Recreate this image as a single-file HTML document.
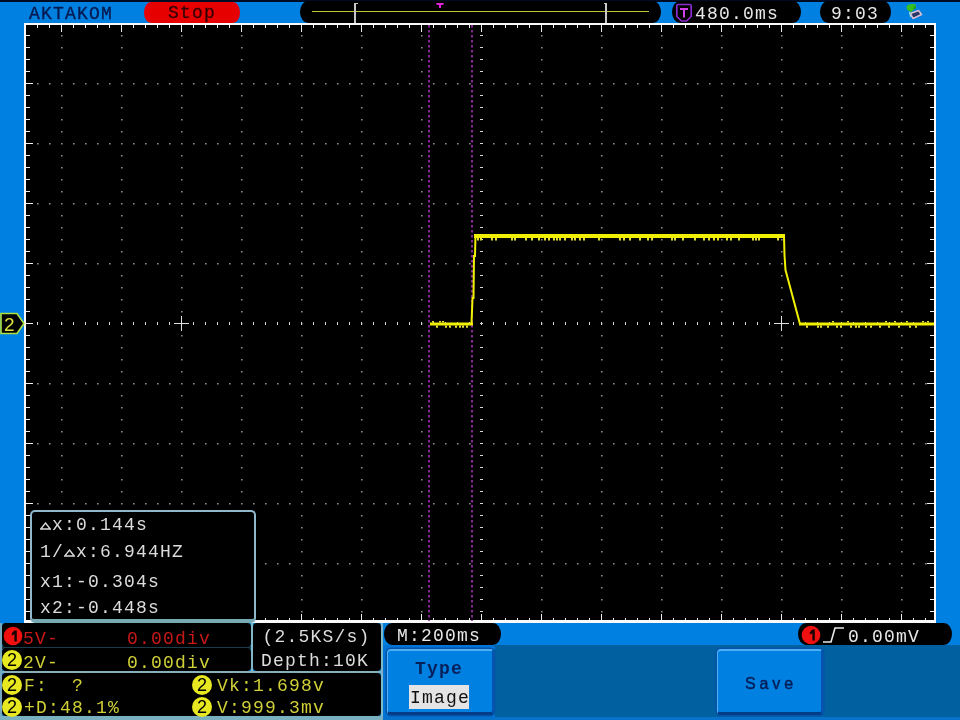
<!DOCTYPE html>
<html><head><meta charset="utf-8"><style>
html,body{margin:0;padding:0;width:960px;height:720px;overflow:hidden;background:#0080e0;}
*{box-sizing:border-box}
.a{position:absolute}
.m{font-family:"Liberation Mono",monospace;font-size:18px;letter-spacing:1.2px;line-height:18px;white-space:pre}
.s{font-family:"Liberation Sans",sans-serif}
.pill{position:absolute;background:#000;border-radius:8px / 11px}
.panel{position:absolute;background:#000;border-radius:5px}
.btn{position:absolute;background:#0080e0;border-radius:4px;border-top:2px solid #50acf4;border-left:1.5px solid #58b0f4;border-right:2px solid #0654b0;border-bottom:3px solid #043c88;box-shadow:0 0 0 1.5px #0454a8}
.circ{position:absolute;width:20px;height:20px;border-radius:50%;font-family:"Liberation Sans",sans-serif;font-size:18px;line-height:21px;text-align:center;color:#000}
#wrap{position:absolute;left:0;top:0;width:960px;height:720px;overflow:hidden;filter:blur(0.4px)}
</style></head><body><div id="wrap">
<svg width="960" height="720" style="position:absolute;left:0;top:0"><rect x="24" y="23" width="912" height="600" fill="#000"/><path d="M37 83h1.6v1.6h-1.6zM49 83h1.6v1.6h-1.6zM73 83h1.6v1.6h-1.6zM85 83h1.6v1.6h-1.6zM97 83h1.6v1.6h-1.6zM109 83h1.6v1.6h-1.6zM133 83h1.6v1.6h-1.6zM145 83h1.6v1.6h-1.6zM157 83h1.6v1.6h-1.6zM169 83h1.6v1.6h-1.6zM193 83h1.6v1.6h-1.6zM205 83h1.6v1.6h-1.6zM217 83h1.6v1.6h-1.6zM229 83h1.6v1.6h-1.6zM253 83h1.6v1.6h-1.6zM265 83h1.6v1.6h-1.6zM277 83h1.6v1.6h-1.6zM289 83h1.6v1.6h-1.6zM313 83h1.6v1.6h-1.6zM325 83h1.6v1.6h-1.6zM337 83h1.6v1.6h-1.6zM349 83h1.6v1.6h-1.6zM373 83h1.6v1.6h-1.6zM385 83h1.6v1.6h-1.6zM397 83h1.6v1.6h-1.6zM409 83h1.6v1.6h-1.6zM433 83h1.6v1.6h-1.6zM445 83h1.6v1.6h-1.6zM457 83h1.6v1.6h-1.6zM469 83h1.6v1.6h-1.6zM493 83h1.6v1.6h-1.6zM505 83h1.6v1.6h-1.6zM517 83h1.6v1.6h-1.6zM529 83h1.6v1.6h-1.6zM553 83h1.6v1.6h-1.6zM565 83h1.6v1.6h-1.6zM577 83h1.6v1.6h-1.6zM589 83h1.6v1.6h-1.6zM613 83h1.6v1.6h-1.6zM625 83h1.6v1.6h-1.6zM637 83h1.6v1.6h-1.6zM649 83h1.6v1.6h-1.6zM673 83h1.6v1.6h-1.6zM685 83h1.6v1.6h-1.6zM697 83h1.6v1.6h-1.6zM709 83h1.6v1.6h-1.6zM733 83h1.6v1.6h-1.6zM745 83h1.6v1.6h-1.6zM757 83h1.6v1.6h-1.6zM769 83h1.6v1.6h-1.6zM793 83h1.6v1.6h-1.6zM805 83h1.6v1.6h-1.6zM817 83h1.6v1.6h-1.6zM829 83h1.6v1.6h-1.6zM853 83h1.6v1.6h-1.6zM865 83h1.6v1.6h-1.6zM877 83h1.6v1.6h-1.6zM889 83h1.6v1.6h-1.6zM913 83h1.6v1.6h-1.6zM925 83h1.6v1.6h-1.6zM37 143h1.6v1.6h-1.6zM49 143h1.6v1.6h-1.6zM73 143h1.6v1.6h-1.6zM85 143h1.6v1.6h-1.6zM97 143h1.6v1.6h-1.6zM109 143h1.6v1.6h-1.6zM133 143h1.6v1.6h-1.6zM145 143h1.6v1.6h-1.6zM157 143h1.6v1.6h-1.6zM169 143h1.6v1.6h-1.6zM193 143h1.6v1.6h-1.6zM205 143h1.6v1.6h-1.6zM217 143h1.6v1.6h-1.6zM229 143h1.6v1.6h-1.6zM253 143h1.6v1.6h-1.6zM265 143h1.6v1.6h-1.6zM277 143h1.6v1.6h-1.6zM289 143h1.6v1.6h-1.6zM313 143h1.6v1.6h-1.6zM325 143h1.6v1.6h-1.6zM337 143h1.6v1.6h-1.6zM349 143h1.6v1.6h-1.6zM373 143h1.6v1.6h-1.6zM385 143h1.6v1.6h-1.6zM397 143h1.6v1.6h-1.6zM409 143h1.6v1.6h-1.6zM433 143h1.6v1.6h-1.6zM445 143h1.6v1.6h-1.6zM457 143h1.6v1.6h-1.6zM469 143h1.6v1.6h-1.6zM493 143h1.6v1.6h-1.6zM505 143h1.6v1.6h-1.6zM517 143h1.6v1.6h-1.6zM529 143h1.6v1.6h-1.6zM553 143h1.6v1.6h-1.6zM565 143h1.6v1.6h-1.6zM577 143h1.6v1.6h-1.6zM589 143h1.6v1.6h-1.6zM613 143h1.6v1.6h-1.6zM625 143h1.6v1.6h-1.6zM637 143h1.6v1.6h-1.6zM649 143h1.6v1.6h-1.6zM673 143h1.6v1.6h-1.6zM685 143h1.6v1.6h-1.6zM697 143h1.6v1.6h-1.6zM709 143h1.6v1.6h-1.6zM733 143h1.6v1.6h-1.6zM745 143h1.6v1.6h-1.6zM757 143h1.6v1.6h-1.6zM769 143h1.6v1.6h-1.6zM793 143h1.6v1.6h-1.6zM805 143h1.6v1.6h-1.6zM817 143h1.6v1.6h-1.6zM829 143h1.6v1.6h-1.6zM853 143h1.6v1.6h-1.6zM865 143h1.6v1.6h-1.6zM877 143h1.6v1.6h-1.6zM889 143h1.6v1.6h-1.6zM913 143h1.6v1.6h-1.6zM925 143h1.6v1.6h-1.6zM37 203h1.6v1.6h-1.6zM49 203h1.6v1.6h-1.6zM73 203h1.6v1.6h-1.6zM85 203h1.6v1.6h-1.6zM97 203h1.6v1.6h-1.6zM109 203h1.6v1.6h-1.6zM133 203h1.6v1.6h-1.6zM145 203h1.6v1.6h-1.6zM157 203h1.6v1.6h-1.6zM169 203h1.6v1.6h-1.6zM193 203h1.6v1.6h-1.6zM205 203h1.6v1.6h-1.6zM217 203h1.6v1.6h-1.6zM229 203h1.6v1.6h-1.6zM253 203h1.6v1.6h-1.6zM265 203h1.6v1.6h-1.6zM277 203h1.6v1.6h-1.6zM289 203h1.6v1.6h-1.6zM313 203h1.6v1.6h-1.6zM325 203h1.6v1.6h-1.6zM337 203h1.6v1.6h-1.6zM349 203h1.6v1.6h-1.6zM373 203h1.6v1.6h-1.6zM385 203h1.6v1.6h-1.6zM397 203h1.6v1.6h-1.6zM409 203h1.6v1.6h-1.6zM433 203h1.6v1.6h-1.6zM445 203h1.6v1.6h-1.6zM457 203h1.6v1.6h-1.6zM469 203h1.6v1.6h-1.6zM493 203h1.6v1.6h-1.6zM505 203h1.6v1.6h-1.6zM517 203h1.6v1.6h-1.6zM529 203h1.6v1.6h-1.6zM553 203h1.6v1.6h-1.6zM565 203h1.6v1.6h-1.6zM577 203h1.6v1.6h-1.6zM589 203h1.6v1.6h-1.6zM613 203h1.6v1.6h-1.6zM625 203h1.6v1.6h-1.6zM637 203h1.6v1.6h-1.6zM649 203h1.6v1.6h-1.6zM673 203h1.6v1.6h-1.6zM685 203h1.6v1.6h-1.6zM697 203h1.6v1.6h-1.6zM709 203h1.6v1.6h-1.6zM733 203h1.6v1.6h-1.6zM745 203h1.6v1.6h-1.6zM757 203h1.6v1.6h-1.6zM769 203h1.6v1.6h-1.6zM793 203h1.6v1.6h-1.6zM805 203h1.6v1.6h-1.6zM817 203h1.6v1.6h-1.6zM829 203h1.6v1.6h-1.6zM853 203h1.6v1.6h-1.6zM865 203h1.6v1.6h-1.6zM877 203h1.6v1.6h-1.6zM889 203h1.6v1.6h-1.6zM913 203h1.6v1.6h-1.6zM925 203h1.6v1.6h-1.6zM37 263h1.6v1.6h-1.6zM49 263h1.6v1.6h-1.6zM73 263h1.6v1.6h-1.6zM85 263h1.6v1.6h-1.6zM97 263h1.6v1.6h-1.6zM109 263h1.6v1.6h-1.6zM133 263h1.6v1.6h-1.6zM145 263h1.6v1.6h-1.6zM157 263h1.6v1.6h-1.6zM169 263h1.6v1.6h-1.6zM193 263h1.6v1.6h-1.6zM205 263h1.6v1.6h-1.6zM217 263h1.6v1.6h-1.6zM229 263h1.6v1.6h-1.6zM253 263h1.6v1.6h-1.6zM265 263h1.6v1.6h-1.6zM277 263h1.6v1.6h-1.6zM289 263h1.6v1.6h-1.6zM313 263h1.6v1.6h-1.6zM325 263h1.6v1.6h-1.6zM337 263h1.6v1.6h-1.6zM349 263h1.6v1.6h-1.6zM373 263h1.6v1.6h-1.6zM385 263h1.6v1.6h-1.6zM397 263h1.6v1.6h-1.6zM409 263h1.6v1.6h-1.6zM433 263h1.6v1.6h-1.6zM445 263h1.6v1.6h-1.6zM457 263h1.6v1.6h-1.6zM469 263h1.6v1.6h-1.6zM493 263h1.6v1.6h-1.6zM505 263h1.6v1.6h-1.6zM517 263h1.6v1.6h-1.6zM529 263h1.6v1.6h-1.6zM553 263h1.6v1.6h-1.6zM565 263h1.6v1.6h-1.6zM577 263h1.6v1.6h-1.6zM589 263h1.6v1.6h-1.6zM613 263h1.6v1.6h-1.6zM625 263h1.6v1.6h-1.6zM637 263h1.6v1.6h-1.6zM649 263h1.6v1.6h-1.6zM673 263h1.6v1.6h-1.6zM685 263h1.6v1.6h-1.6zM697 263h1.6v1.6h-1.6zM709 263h1.6v1.6h-1.6zM733 263h1.6v1.6h-1.6zM745 263h1.6v1.6h-1.6zM757 263h1.6v1.6h-1.6zM769 263h1.6v1.6h-1.6zM793 263h1.6v1.6h-1.6zM805 263h1.6v1.6h-1.6zM817 263h1.6v1.6h-1.6zM829 263h1.6v1.6h-1.6zM853 263h1.6v1.6h-1.6zM865 263h1.6v1.6h-1.6zM877 263h1.6v1.6h-1.6zM889 263h1.6v1.6h-1.6zM913 263h1.6v1.6h-1.6zM925 263h1.6v1.6h-1.6zM37 383h1.6v1.6h-1.6zM49 383h1.6v1.6h-1.6zM73 383h1.6v1.6h-1.6zM85 383h1.6v1.6h-1.6zM97 383h1.6v1.6h-1.6zM109 383h1.6v1.6h-1.6zM133 383h1.6v1.6h-1.6zM145 383h1.6v1.6h-1.6zM157 383h1.6v1.6h-1.6zM169 383h1.6v1.6h-1.6zM193 383h1.6v1.6h-1.6zM205 383h1.6v1.6h-1.6zM217 383h1.6v1.6h-1.6zM229 383h1.6v1.6h-1.6zM253 383h1.6v1.6h-1.6zM265 383h1.6v1.6h-1.6zM277 383h1.6v1.6h-1.6zM289 383h1.6v1.6h-1.6zM313 383h1.6v1.6h-1.6zM325 383h1.6v1.6h-1.6zM337 383h1.6v1.6h-1.6zM349 383h1.6v1.6h-1.6zM373 383h1.6v1.6h-1.6zM385 383h1.6v1.6h-1.6zM397 383h1.6v1.6h-1.6zM409 383h1.6v1.6h-1.6zM433 383h1.6v1.6h-1.6zM445 383h1.6v1.6h-1.6zM457 383h1.6v1.6h-1.6zM469 383h1.6v1.6h-1.6zM493 383h1.6v1.6h-1.6zM505 383h1.6v1.6h-1.6zM517 383h1.6v1.6h-1.6zM529 383h1.6v1.6h-1.6zM553 383h1.6v1.6h-1.6zM565 383h1.6v1.6h-1.6zM577 383h1.6v1.6h-1.6zM589 383h1.6v1.6h-1.6zM613 383h1.6v1.6h-1.6zM625 383h1.6v1.6h-1.6zM637 383h1.6v1.6h-1.6zM649 383h1.6v1.6h-1.6zM673 383h1.6v1.6h-1.6zM685 383h1.6v1.6h-1.6zM697 383h1.6v1.6h-1.6zM709 383h1.6v1.6h-1.6zM733 383h1.6v1.6h-1.6zM745 383h1.6v1.6h-1.6zM757 383h1.6v1.6h-1.6zM769 383h1.6v1.6h-1.6zM793 383h1.6v1.6h-1.6zM805 383h1.6v1.6h-1.6zM817 383h1.6v1.6h-1.6zM829 383h1.6v1.6h-1.6zM853 383h1.6v1.6h-1.6zM865 383h1.6v1.6h-1.6zM877 383h1.6v1.6h-1.6zM889 383h1.6v1.6h-1.6zM913 383h1.6v1.6h-1.6zM925 383h1.6v1.6h-1.6zM37 443h1.6v1.6h-1.6zM49 443h1.6v1.6h-1.6zM73 443h1.6v1.6h-1.6zM85 443h1.6v1.6h-1.6zM97 443h1.6v1.6h-1.6zM109 443h1.6v1.6h-1.6zM133 443h1.6v1.6h-1.6zM145 443h1.6v1.6h-1.6zM157 443h1.6v1.6h-1.6zM169 443h1.6v1.6h-1.6zM193 443h1.6v1.6h-1.6zM205 443h1.6v1.6h-1.6zM217 443h1.6v1.6h-1.6zM229 443h1.6v1.6h-1.6zM253 443h1.6v1.6h-1.6zM265 443h1.6v1.6h-1.6zM277 443h1.6v1.6h-1.6zM289 443h1.6v1.6h-1.6zM313 443h1.6v1.6h-1.6zM325 443h1.6v1.6h-1.6zM337 443h1.6v1.6h-1.6zM349 443h1.6v1.6h-1.6zM373 443h1.6v1.6h-1.6zM385 443h1.6v1.6h-1.6zM397 443h1.6v1.6h-1.6zM409 443h1.6v1.6h-1.6zM433 443h1.6v1.6h-1.6zM445 443h1.6v1.6h-1.6zM457 443h1.6v1.6h-1.6zM469 443h1.6v1.6h-1.6zM493 443h1.6v1.6h-1.6zM505 443h1.6v1.6h-1.6zM517 443h1.6v1.6h-1.6zM529 443h1.6v1.6h-1.6zM553 443h1.6v1.6h-1.6zM565 443h1.6v1.6h-1.6zM577 443h1.6v1.6h-1.6zM589 443h1.6v1.6h-1.6zM613 443h1.6v1.6h-1.6zM625 443h1.6v1.6h-1.6zM637 443h1.6v1.6h-1.6zM649 443h1.6v1.6h-1.6zM673 443h1.6v1.6h-1.6zM685 443h1.6v1.6h-1.6zM697 443h1.6v1.6h-1.6zM709 443h1.6v1.6h-1.6zM733 443h1.6v1.6h-1.6zM745 443h1.6v1.6h-1.6zM757 443h1.6v1.6h-1.6zM769 443h1.6v1.6h-1.6zM793 443h1.6v1.6h-1.6zM805 443h1.6v1.6h-1.6zM817 443h1.6v1.6h-1.6zM829 443h1.6v1.6h-1.6zM853 443h1.6v1.6h-1.6zM865 443h1.6v1.6h-1.6zM877 443h1.6v1.6h-1.6zM889 443h1.6v1.6h-1.6zM913 443h1.6v1.6h-1.6zM925 443h1.6v1.6h-1.6zM37 503h1.6v1.6h-1.6zM49 503h1.6v1.6h-1.6zM73 503h1.6v1.6h-1.6zM85 503h1.6v1.6h-1.6zM97 503h1.6v1.6h-1.6zM109 503h1.6v1.6h-1.6zM133 503h1.6v1.6h-1.6zM145 503h1.6v1.6h-1.6zM157 503h1.6v1.6h-1.6zM169 503h1.6v1.6h-1.6zM193 503h1.6v1.6h-1.6zM205 503h1.6v1.6h-1.6zM217 503h1.6v1.6h-1.6zM229 503h1.6v1.6h-1.6zM253 503h1.6v1.6h-1.6zM265 503h1.6v1.6h-1.6zM277 503h1.6v1.6h-1.6zM289 503h1.6v1.6h-1.6zM313 503h1.6v1.6h-1.6zM325 503h1.6v1.6h-1.6zM337 503h1.6v1.6h-1.6zM349 503h1.6v1.6h-1.6zM373 503h1.6v1.6h-1.6zM385 503h1.6v1.6h-1.6zM397 503h1.6v1.6h-1.6zM409 503h1.6v1.6h-1.6zM433 503h1.6v1.6h-1.6zM445 503h1.6v1.6h-1.6zM457 503h1.6v1.6h-1.6zM469 503h1.6v1.6h-1.6zM493 503h1.6v1.6h-1.6zM505 503h1.6v1.6h-1.6zM517 503h1.6v1.6h-1.6zM529 503h1.6v1.6h-1.6zM553 503h1.6v1.6h-1.6zM565 503h1.6v1.6h-1.6zM577 503h1.6v1.6h-1.6zM589 503h1.6v1.6h-1.6zM613 503h1.6v1.6h-1.6zM625 503h1.6v1.6h-1.6zM637 503h1.6v1.6h-1.6zM649 503h1.6v1.6h-1.6zM673 503h1.6v1.6h-1.6zM685 503h1.6v1.6h-1.6zM697 503h1.6v1.6h-1.6zM709 503h1.6v1.6h-1.6zM733 503h1.6v1.6h-1.6zM745 503h1.6v1.6h-1.6zM757 503h1.6v1.6h-1.6zM769 503h1.6v1.6h-1.6zM793 503h1.6v1.6h-1.6zM805 503h1.6v1.6h-1.6zM817 503h1.6v1.6h-1.6zM829 503h1.6v1.6h-1.6zM853 503h1.6v1.6h-1.6zM865 503h1.6v1.6h-1.6zM877 503h1.6v1.6h-1.6zM889 503h1.6v1.6h-1.6zM913 503h1.6v1.6h-1.6zM925 503h1.6v1.6h-1.6zM37 563h1.6v1.6h-1.6zM49 563h1.6v1.6h-1.6zM73 563h1.6v1.6h-1.6zM85 563h1.6v1.6h-1.6zM97 563h1.6v1.6h-1.6zM109 563h1.6v1.6h-1.6zM133 563h1.6v1.6h-1.6zM145 563h1.6v1.6h-1.6zM157 563h1.6v1.6h-1.6zM169 563h1.6v1.6h-1.6zM193 563h1.6v1.6h-1.6zM205 563h1.6v1.6h-1.6zM217 563h1.6v1.6h-1.6zM229 563h1.6v1.6h-1.6zM253 563h1.6v1.6h-1.6zM265 563h1.6v1.6h-1.6zM277 563h1.6v1.6h-1.6zM289 563h1.6v1.6h-1.6zM313 563h1.6v1.6h-1.6zM325 563h1.6v1.6h-1.6zM337 563h1.6v1.6h-1.6zM349 563h1.6v1.6h-1.6zM373 563h1.6v1.6h-1.6zM385 563h1.6v1.6h-1.6zM397 563h1.6v1.6h-1.6zM409 563h1.6v1.6h-1.6zM433 563h1.6v1.6h-1.6zM445 563h1.6v1.6h-1.6zM457 563h1.6v1.6h-1.6zM469 563h1.6v1.6h-1.6zM493 563h1.6v1.6h-1.6zM505 563h1.6v1.6h-1.6zM517 563h1.6v1.6h-1.6zM529 563h1.6v1.6h-1.6zM553 563h1.6v1.6h-1.6zM565 563h1.6v1.6h-1.6zM577 563h1.6v1.6h-1.6zM589 563h1.6v1.6h-1.6zM613 563h1.6v1.6h-1.6zM625 563h1.6v1.6h-1.6zM637 563h1.6v1.6h-1.6zM649 563h1.6v1.6h-1.6zM673 563h1.6v1.6h-1.6zM685 563h1.6v1.6h-1.6zM697 563h1.6v1.6h-1.6zM709 563h1.6v1.6h-1.6zM733 563h1.6v1.6h-1.6zM745 563h1.6v1.6h-1.6zM757 563h1.6v1.6h-1.6zM769 563h1.6v1.6h-1.6zM793 563h1.6v1.6h-1.6zM805 563h1.6v1.6h-1.6zM817 563h1.6v1.6h-1.6zM829 563h1.6v1.6h-1.6zM853 563h1.6v1.6h-1.6zM865 563h1.6v1.6h-1.6zM877 563h1.6v1.6h-1.6zM889 563h1.6v1.6h-1.6zM913 563h1.6v1.6h-1.6zM925 563h1.6v1.6h-1.6zM61 35h1.6v1.6h-1.6zM61 47h1.6v1.6h-1.6zM61 59h1.6v1.6h-1.6zM61 71h1.6v1.6h-1.6zM61 83h1.6v1.6h-1.6zM61 95h1.6v1.6h-1.6zM61 107h1.6v1.6h-1.6zM61 119h1.6v1.6h-1.6zM61 131h1.6v1.6h-1.6zM61 143h1.6v1.6h-1.6zM61 155h1.6v1.6h-1.6zM61 167h1.6v1.6h-1.6zM61 179h1.6v1.6h-1.6zM61 191h1.6v1.6h-1.6zM61 203h1.6v1.6h-1.6zM61 215h1.6v1.6h-1.6zM61 227h1.6v1.6h-1.6zM61 239h1.6v1.6h-1.6zM61 251h1.6v1.6h-1.6zM61 263h1.6v1.6h-1.6zM61 275h1.6v1.6h-1.6zM61 287h1.6v1.6h-1.6zM61 299h1.6v1.6h-1.6zM61 311h1.6v1.6h-1.6zM61 323h1.6v1.6h-1.6zM61 335h1.6v1.6h-1.6zM61 347h1.6v1.6h-1.6zM61 359h1.6v1.6h-1.6zM61 371h1.6v1.6h-1.6zM61 383h1.6v1.6h-1.6zM61 395h1.6v1.6h-1.6zM61 407h1.6v1.6h-1.6zM61 419h1.6v1.6h-1.6zM61 431h1.6v1.6h-1.6zM61 443h1.6v1.6h-1.6zM61 455h1.6v1.6h-1.6zM61 467h1.6v1.6h-1.6zM61 479h1.6v1.6h-1.6zM61 491h1.6v1.6h-1.6zM61 503h1.6v1.6h-1.6zM61 515h1.6v1.6h-1.6zM61 527h1.6v1.6h-1.6zM61 539h1.6v1.6h-1.6zM61 551h1.6v1.6h-1.6zM61 563h1.6v1.6h-1.6zM61 575h1.6v1.6h-1.6zM61 587h1.6v1.6h-1.6zM61 599h1.6v1.6h-1.6zM61 611h1.6v1.6h-1.6zM121 35h1.6v1.6h-1.6zM121 47h1.6v1.6h-1.6zM121 59h1.6v1.6h-1.6zM121 71h1.6v1.6h-1.6zM121 83h1.6v1.6h-1.6zM121 95h1.6v1.6h-1.6zM121 107h1.6v1.6h-1.6zM121 119h1.6v1.6h-1.6zM121 131h1.6v1.6h-1.6zM121 143h1.6v1.6h-1.6zM121 155h1.6v1.6h-1.6zM121 167h1.6v1.6h-1.6zM121 179h1.6v1.6h-1.6zM121 191h1.6v1.6h-1.6zM121 203h1.6v1.6h-1.6zM121 215h1.6v1.6h-1.6zM121 227h1.6v1.6h-1.6zM121 239h1.6v1.6h-1.6zM121 251h1.6v1.6h-1.6zM121 263h1.6v1.6h-1.6zM121 275h1.6v1.6h-1.6zM121 287h1.6v1.6h-1.6zM121 299h1.6v1.6h-1.6zM121 311h1.6v1.6h-1.6zM121 323h1.6v1.6h-1.6zM121 335h1.6v1.6h-1.6zM121 347h1.6v1.6h-1.6zM121 359h1.6v1.6h-1.6zM121 371h1.6v1.6h-1.6zM121 383h1.6v1.6h-1.6zM121 395h1.6v1.6h-1.6zM121 407h1.6v1.6h-1.6zM121 419h1.6v1.6h-1.6zM121 431h1.6v1.6h-1.6zM121 443h1.6v1.6h-1.6zM121 455h1.6v1.6h-1.6zM121 467h1.6v1.6h-1.6zM121 479h1.6v1.6h-1.6zM121 491h1.6v1.6h-1.6zM121 503h1.6v1.6h-1.6zM121 515h1.6v1.6h-1.6zM121 527h1.6v1.6h-1.6zM121 539h1.6v1.6h-1.6zM121 551h1.6v1.6h-1.6zM121 563h1.6v1.6h-1.6zM121 575h1.6v1.6h-1.6zM121 587h1.6v1.6h-1.6zM121 599h1.6v1.6h-1.6zM121 611h1.6v1.6h-1.6zM181 35h1.6v1.6h-1.6zM181 47h1.6v1.6h-1.6zM181 59h1.6v1.6h-1.6zM181 71h1.6v1.6h-1.6zM181 83h1.6v1.6h-1.6zM181 95h1.6v1.6h-1.6zM181 107h1.6v1.6h-1.6zM181 119h1.6v1.6h-1.6zM181 131h1.6v1.6h-1.6zM181 143h1.6v1.6h-1.6zM181 155h1.6v1.6h-1.6zM181 167h1.6v1.6h-1.6zM181 179h1.6v1.6h-1.6zM181 191h1.6v1.6h-1.6zM181 203h1.6v1.6h-1.6zM181 215h1.6v1.6h-1.6zM181 227h1.6v1.6h-1.6zM181 239h1.6v1.6h-1.6zM181 251h1.6v1.6h-1.6zM181 263h1.6v1.6h-1.6zM181 275h1.6v1.6h-1.6zM181 287h1.6v1.6h-1.6zM181 299h1.6v1.6h-1.6zM181 311h1.6v1.6h-1.6zM181 323h1.6v1.6h-1.6zM181 335h1.6v1.6h-1.6zM181 347h1.6v1.6h-1.6zM181 359h1.6v1.6h-1.6zM181 371h1.6v1.6h-1.6zM181 383h1.6v1.6h-1.6zM181 395h1.6v1.6h-1.6zM181 407h1.6v1.6h-1.6zM181 419h1.6v1.6h-1.6zM181 431h1.6v1.6h-1.6zM181 443h1.6v1.6h-1.6zM181 455h1.6v1.6h-1.6zM181 467h1.6v1.6h-1.6zM181 479h1.6v1.6h-1.6zM181 491h1.6v1.6h-1.6zM181 503h1.6v1.6h-1.6zM181 515h1.6v1.6h-1.6zM181 527h1.6v1.6h-1.6zM181 539h1.6v1.6h-1.6zM181 551h1.6v1.6h-1.6zM181 563h1.6v1.6h-1.6zM181 575h1.6v1.6h-1.6zM181 587h1.6v1.6h-1.6zM181 599h1.6v1.6h-1.6zM181 611h1.6v1.6h-1.6zM241 35h1.6v1.6h-1.6zM241 47h1.6v1.6h-1.6zM241 59h1.6v1.6h-1.6zM241 71h1.6v1.6h-1.6zM241 83h1.6v1.6h-1.6zM241 95h1.6v1.6h-1.6zM241 107h1.6v1.6h-1.6zM241 119h1.6v1.6h-1.6zM241 131h1.6v1.6h-1.6zM241 143h1.6v1.6h-1.6zM241 155h1.6v1.6h-1.6zM241 167h1.6v1.6h-1.6zM241 179h1.6v1.6h-1.6zM241 191h1.6v1.6h-1.6zM241 203h1.6v1.6h-1.6zM241 215h1.6v1.6h-1.6zM241 227h1.6v1.6h-1.6zM241 239h1.6v1.6h-1.6zM241 251h1.6v1.6h-1.6zM241 263h1.6v1.6h-1.6zM241 275h1.6v1.6h-1.6zM241 287h1.6v1.6h-1.6zM241 299h1.6v1.6h-1.6zM241 311h1.6v1.6h-1.6zM241 323h1.6v1.6h-1.6zM241 335h1.6v1.6h-1.6zM241 347h1.6v1.6h-1.6zM241 359h1.6v1.6h-1.6zM241 371h1.6v1.6h-1.6zM241 383h1.6v1.6h-1.6zM241 395h1.6v1.6h-1.6zM241 407h1.6v1.6h-1.6zM241 419h1.6v1.6h-1.6zM241 431h1.6v1.6h-1.6zM241 443h1.6v1.6h-1.6zM241 455h1.6v1.6h-1.6zM241 467h1.6v1.6h-1.6zM241 479h1.6v1.6h-1.6zM241 491h1.6v1.6h-1.6zM241 503h1.6v1.6h-1.6zM241 515h1.6v1.6h-1.6zM241 527h1.6v1.6h-1.6zM241 539h1.6v1.6h-1.6zM241 551h1.6v1.6h-1.6zM241 563h1.6v1.6h-1.6zM241 575h1.6v1.6h-1.6zM241 587h1.6v1.6h-1.6zM241 599h1.6v1.6h-1.6zM241 611h1.6v1.6h-1.6zM301 35h1.6v1.6h-1.6zM301 47h1.6v1.6h-1.6zM301 59h1.6v1.6h-1.6zM301 71h1.6v1.6h-1.6zM301 83h1.6v1.6h-1.6zM301 95h1.6v1.6h-1.6zM301 107h1.6v1.6h-1.6zM301 119h1.6v1.6h-1.6zM301 131h1.6v1.6h-1.6zM301 143h1.6v1.6h-1.6zM301 155h1.6v1.6h-1.6zM301 167h1.6v1.6h-1.6zM301 179h1.6v1.6h-1.6zM301 191h1.6v1.6h-1.6zM301 203h1.6v1.6h-1.6zM301 215h1.6v1.6h-1.6zM301 227h1.6v1.6h-1.6zM301 239h1.6v1.6h-1.6zM301 251h1.6v1.6h-1.6zM301 263h1.6v1.6h-1.6zM301 275h1.6v1.6h-1.6zM301 287h1.6v1.6h-1.6zM301 299h1.6v1.6h-1.6zM301 311h1.6v1.6h-1.6zM301 323h1.6v1.6h-1.6zM301 335h1.6v1.6h-1.6zM301 347h1.6v1.6h-1.6zM301 359h1.6v1.6h-1.6zM301 371h1.6v1.6h-1.6zM301 383h1.6v1.6h-1.6zM301 395h1.6v1.6h-1.6zM301 407h1.6v1.6h-1.6zM301 419h1.6v1.6h-1.6zM301 431h1.6v1.6h-1.6zM301 443h1.6v1.6h-1.6zM301 455h1.6v1.6h-1.6zM301 467h1.6v1.6h-1.6zM301 479h1.6v1.6h-1.6zM301 491h1.6v1.6h-1.6zM301 503h1.6v1.6h-1.6zM301 515h1.6v1.6h-1.6zM301 527h1.6v1.6h-1.6zM301 539h1.6v1.6h-1.6zM301 551h1.6v1.6h-1.6zM301 563h1.6v1.6h-1.6zM301 575h1.6v1.6h-1.6zM301 587h1.6v1.6h-1.6zM301 599h1.6v1.6h-1.6zM301 611h1.6v1.6h-1.6zM361 35h1.6v1.6h-1.6zM361 47h1.6v1.6h-1.6zM361 59h1.6v1.6h-1.6zM361 71h1.6v1.6h-1.6zM361 83h1.6v1.6h-1.6zM361 95h1.6v1.6h-1.6zM361 107h1.6v1.6h-1.6zM361 119h1.6v1.6h-1.6zM361 131h1.6v1.6h-1.6zM361 143h1.6v1.6h-1.6zM361 155h1.6v1.6h-1.6zM361 167h1.6v1.6h-1.6zM361 179h1.6v1.6h-1.6zM361 191h1.6v1.6h-1.6zM361 203h1.6v1.6h-1.6zM361 215h1.6v1.6h-1.6zM361 227h1.6v1.6h-1.6zM361 239h1.6v1.6h-1.6zM361 251h1.6v1.6h-1.6zM361 263h1.6v1.6h-1.6zM361 275h1.6v1.6h-1.6zM361 287h1.6v1.6h-1.6zM361 299h1.6v1.6h-1.6zM361 311h1.6v1.6h-1.6zM361 323h1.6v1.6h-1.6zM361 335h1.6v1.6h-1.6zM361 347h1.6v1.6h-1.6zM361 359h1.6v1.6h-1.6zM361 371h1.6v1.6h-1.6zM361 383h1.6v1.6h-1.6zM361 395h1.6v1.6h-1.6zM361 407h1.6v1.6h-1.6zM361 419h1.6v1.6h-1.6zM361 431h1.6v1.6h-1.6zM361 443h1.6v1.6h-1.6zM361 455h1.6v1.6h-1.6zM361 467h1.6v1.6h-1.6zM361 479h1.6v1.6h-1.6zM361 491h1.6v1.6h-1.6zM361 503h1.6v1.6h-1.6zM361 515h1.6v1.6h-1.6zM361 527h1.6v1.6h-1.6zM361 539h1.6v1.6h-1.6zM361 551h1.6v1.6h-1.6zM361 563h1.6v1.6h-1.6zM361 575h1.6v1.6h-1.6zM361 587h1.6v1.6h-1.6zM361 599h1.6v1.6h-1.6zM361 611h1.6v1.6h-1.6zM421 35h1.6v1.6h-1.6zM421 47h1.6v1.6h-1.6zM421 59h1.6v1.6h-1.6zM421 71h1.6v1.6h-1.6zM421 83h1.6v1.6h-1.6zM421 95h1.6v1.6h-1.6zM421 107h1.6v1.6h-1.6zM421 119h1.6v1.6h-1.6zM421 131h1.6v1.6h-1.6zM421 143h1.6v1.6h-1.6zM421 155h1.6v1.6h-1.6zM421 167h1.6v1.6h-1.6zM421 179h1.6v1.6h-1.6zM421 191h1.6v1.6h-1.6zM421 203h1.6v1.6h-1.6zM421 215h1.6v1.6h-1.6zM421 227h1.6v1.6h-1.6zM421 239h1.6v1.6h-1.6zM421 251h1.6v1.6h-1.6zM421 263h1.6v1.6h-1.6zM421 275h1.6v1.6h-1.6zM421 287h1.6v1.6h-1.6zM421 299h1.6v1.6h-1.6zM421 311h1.6v1.6h-1.6zM421 323h1.6v1.6h-1.6zM421 335h1.6v1.6h-1.6zM421 347h1.6v1.6h-1.6zM421 359h1.6v1.6h-1.6zM421 371h1.6v1.6h-1.6zM421 383h1.6v1.6h-1.6zM421 395h1.6v1.6h-1.6zM421 407h1.6v1.6h-1.6zM421 419h1.6v1.6h-1.6zM421 431h1.6v1.6h-1.6zM421 443h1.6v1.6h-1.6zM421 455h1.6v1.6h-1.6zM421 467h1.6v1.6h-1.6zM421 479h1.6v1.6h-1.6zM421 491h1.6v1.6h-1.6zM421 503h1.6v1.6h-1.6zM421 515h1.6v1.6h-1.6zM421 527h1.6v1.6h-1.6zM421 539h1.6v1.6h-1.6zM421 551h1.6v1.6h-1.6zM421 563h1.6v1.6h-1.6zM421 575h1.6v1.6h-1.6zM421 587h1.6v1.6h-1.6zM421 599h1.6v1.6h-1.6zM421 611h1.6v1.6h-1.6zM541 35h1.6v1.6h-1.6zM541 47h1.6v1.6h-1.6zM541 59h1.6v1.6h-1.6zM541 71h1.6v1.6h-1.6zM541 83h1.6v1.6h-1.6zM541 95h1.6v1.6h-1.6zM541 107h1.6v1.6h-1.6zM541 119h1.6v1.6h-1.6zM541 131h1.6v1.6h-1.6zM541 143h1.6v1.6h-1.6zM541 155h1.6v1.6h-1.6zM541 167h1.6v1.6h-1.6zM541 179h1.6v1.6h-1.6zM541 191h1.6v1.6h-1.6zM541 203h1.6v1.6h-1.6zM541 215h1.6v1.6h-1.6zM541 227h1.6v1.6h-1.6zM541 239h1.6v1.6h-1.6zM541 251h1.6v1.6h-1.6zM541 263h1.6v1.6h-1.6zM541 275h1.6v1.6h-1.6zM541 287h1.6v1.6h-1.6zM541 299h1.6v1.6h-1.6zM541 311h1.6v1.6h-1.6zM541 323h1.6v1.6h-1.6zM541 335h1.6v1.6h-1.6zM541 347h1.6v1.6h-1.6zM541 359h1.6v1.6h-1.6zM541 371h1.6v1.6h-1.6zM541 383h1.6v1.6h-1.6zM541 395h1.6v1.6h-1.6zM541 407h1.6v1.6h-1.6zM541 419h1.6v1.6h-1.6zM541 431h1.6v1.6h-1.6zM541 443h1.6v1.6h-1.6zM541 455h1.6v1.6h-1.6zM541 467h1.6v1.6h-1.6zM541 479h1.6v1.6h-1.6zM541 491h1.6v1.6h-1.6zM541 503h1.6v1.6h-1.6zM541 515h1.6v1.6h-1.6zM541 527h1.6v1.6h-1.6zM541 539h1.6v1.6h-1.6zM541 551h1.6v1.6h-1.6zM541 563h1.6v1.6h-1.6zM541 575h1.6v1.6h-1.6zM541 587h1.6v1.6h-1.6zM541 599h1.6v1.6h-1.6zM541 611h1.6v1.6h-1.6zM601 35h1.6v1.6h-1.6zM601 47h1.6v1.6h-1.6zM601 59h1.6v1.6h-1.6zM601 71h1.6v1.6h-1.6zM601 83h1.6v1.6h-1.6zM601 95h1.6v1.6h-1.6zM601 107h1.6v1.6h-1.6zM601 119h1.6v1.6h-1.6zM601 131h1.6v1.6h-1.6zM601 143h1.6v1.6h-1.6zM601 155h1.6v1.6h-1.6zM601 167h1.6v1.6h-1.6zM601 179h1.6v1.6h-1.6zM601 191h1.6v1.6h-1.6zM601 203h1.6v1.6h-1.6zM601 215h1.6v1.6h-1.6zM601 227h1.6v1.6h-1.6zM601 239h1.6v1.6h-1.6zM601 251h1.6v1.6h-1.6zM601 263h1.6v1.6h-1.6zM601 275h1.6v1.6h-1.6zM601 287h1.6v1.6h-1.6zM601 299h1.6v1.6h-1.6zM601 311h1.6v1.6h-1.6zM601 323h1.6v1.6h-1.6zM601 335h1.6v1.6h-1.6zM601 347h1.6v1.6h-1.6zM601 359h1.6v1.6h-1.6zM601 371h1.6v1.6h-1.6zM601 383h1.6v1.6h-1.6zM601 395h1.6v1.6h-1.6zM601 407h1.6v1.6h-1.6zM601 419h1.6v1.6h-1.6zM601 431h1.6v1.6h-1.6zM601 443h1.6v1.6h-1.6zM601 455h1.6v1.6h-1.6zM601 467h1.6v1.6h-1.6zM601 479h1.6v1.6h-1.6zM601 491h1.6v1.6h-1.6zM601 503h1.6v1.6h-1.6zM601 515h1.6v1.6h-1.6zM601 527h1.6v1.6h-1.6zM601 539h1.6v1.6h-1.6zM601 551h1.6v1.6h-1.6zM601 563h1.6v1.6h-1.6zM601 575h1.6v1.6h-1.6zM601 587h1.6v1.6h-1.6zM601 599h1.6v1.6h-1.6zM601 611h1.6v1.6h-1.6zM661 35h1.6v1.6h-1.6zM661 47h1.6v1.6h-1.6zM661 59h1.6v1.6h-1.6zM661 71h1.6v1.6h-1.6zM661 83h1.6v1.6h-1.6zM661 95h1.6v1.6h-1.6zM661 107h1.6v1.6h-1.6zM661 119h1.6v1.6h-1.6zM661 131h1.6v1.6h-1.6zM661 143h1.6v1.6h-1.6zM661 155h1.6v1.6h-1.6zM661 167h1.6v1.6h-1.6zM661 179h1.6v1.6h-1.6zM661 191h1.6v1.6h-1.6zM661 203h1.6v1.6h-1.6zM661 215h1.6v1.6h-1.6zM661 227h1.6v1.6h-1.6zM661 239h1.6v1.6h-1.6zM661 251h1.6v1.6h-1.6zM661 263h1.6v1.6h-1.6zM661 275h1.6v1.6h-1.6zM661 287h1.6v1.6h-1.6zM661 299h1.6v1.6h-1.6zM661 311h1.6v1.6h-1.6zM661 323h1.6v1.6h-1.6zM661 335h1.6v1.6h-1.6zM661 347h1.6v1.6h-1.6zM661 359h1.6v1.6h-1.6zM661 371h1.6v1.6h-1.6zM661 383h1.6v1.6h-1.6zM661 395h1.6v1.6h-1.6zM661 407h1.6v1.6h-1.6zM661 419h1.6v1.6h-1.6zM661 431h1.6v1.6h-1.6zM661 443h1.6v1.6h-1.6zM661 455h1.6v1.6h-1.6zM661 467h1.6v1.6h-1.6zM661 479h1.6v1.6h-1.6zM661 491h1.6v1.6h-1.6zM661 503h1.6v1.6h-1.6zM661 515h1.6v1.6h-1.6zM661 527h1.6v1.6h-1.6zM661 539h1.6v1.6h-1.6zM661 551h1.6v1.6h-1.6zM661 563h1.6v1.6h-1.6zM661 575h1.6v1.6h-1.6zM661 587h1.6v1.6h-1.6zM661 599h1.6v1.6h-1.6zM661 611h1.6v1.6h-1.6zM721 35h1.6v1.6h-1.6zM721 47h1.6v1.6h-1.6zM721 59h1.6v1.6h-1.6zM721 71h1.6v1.6h-1.6zM721 83h1.6v1.6h-1.6zM721 95h1.6v1.6h-1.6zM721 107h1.6v1.6h-1.6zM721 119h1.6v1.6h-1.6zM721 131h1.6v1.6h-1.6zM721 143h1.6v1.6h-1.6zM721 155h1.6v1.6h-1.6zM721 167h1.6v1.6h-1.6zM721 179h1.6v1.6h-1.6zM721 191h1.6v1.6h-1.6zM721 203h1.6v1.6h-1.6zM721 215h1.6v1.6h-1.6zM721 227h1.6v1.6h-1.6zM721 239h1.6v1.6h-1.6zM721 251h1.6v1.6h-1.6zM721 263h1.6v1.6h-1.6zM721 275h1.6v1.6h-1.6zM721 287h1.6v1.6h-1.6zM721 299h1.6v1.6h-1.6zM721 311h1.6v1.6h-1.6zM721 323h1.6v1.6h-1.6zM721 335h1.6v1.6h-1.6zM721 347h1.6v1.6h-1.6zM721 359h1.6v1.6h-1.6zM721 371h1.6v1.6h-1.6zM721 383h1.6v1.6h-1.6zM721 395h1.6v1.6h-1.6zM721 407h1.6v1.6h-1.6zM721 419h1.6v1.6h-1.6zM721 431h1.6v1.6h-1.6zM721 443h1.6v1.6h-1.6zM721 455h1.6v1.6h-1.6zM721 467h1.6v1.6h-1.6zM721 479h1.6v1.6h-1.6zM721 491h1.6v1.6h-1.6zM721 503h1.6v1.6h-1.6zM721 515h1.6v1.6h-1.6zM721 527h1.6v1.6h-1.6zM721 539h1.6v1.6h-1.6zM721 551h1.6v1.6h-1.6zM721 563h1.6v1.6h-1.6zM721 575h1.6v1.6h-1.6zM721 587h1.6v1.6h-1.6zM721 599h1.6v1.6h-1.6zM721 611h1.6v1.6h-1.6zM781 35h1.6v1.6h-1.6zM781 47h1.6v1.6h-1.6zM781 59h1.6v1.6h-1.6zM781 71h1.6v1.6h-1.6zM781 83h1.6v1.6h-1.6zM781 95h1.6v1.6h-1.6zM781 107h1.6v1.6h-1.6zM781 119h1.6v1.6h-1.6zM781 131h1.6v1.6h-1.6zM781 143h1.6v1.6h-1.6zM781 155h1.6v1.6h-1.6zM781 167h1.6v1.6h-1.6zM781 179h1.6v1.6h-1.6zM781 191h1.6v1.6h-1.6zM781 203h1.6v1.6h-1.6zM781 215h1.6v1.6h-1.6zM781 227h1.6v1.6h-1.6zM781 239h1.6v1.6h-1.6zM781 251h1.6v1.6h-1.6zM781 263h1.6v1.6h-1.6zM781 275h1.6v1.6h-1.6zM781 287h1.6v1.6h-1.6zM781 299h1.6v1.6h-1.6zM781 311h1.6v1.6h-1.6zM781 323h1.6v1.6h-1.6zM781 335h1.6v1.6h-1.6zM781 347h1.6v1.6h-1.6zM781 359h1.6v1.6h-1.6zM781 371h1.6v1.6h-1.6zM781 383h1.6v1.6h-1.6zM781 395h1.6v1.6h-1.6zM781 407h1.6v1.6h-1.6zM781 419h1.6v1.6h-1.6zM781 431h1.6v1.6h-1.6zM781 443h1.6v1.6h-1.6zM781 455h1.6v1.6h-1.6zM781 467h1.6v1.6h-1.6zM781 479h1.6v1.6h-1.6zM781 491h1.6v1.6h-1.6zM781 503h1.6v1.6h-1.6zM781 515h1.6v1.6h-1.6zM781 527h1.6v1.6h-1.6zM781 539h1.6v1.6h-1.6zM781 551h1.6v1.6h-1.6zM781 563h1.6v1.6h-1.6zM781 575h1.6v1.6h-1.6zM781 587h1.6v1.6h-1.6zM781 599h1.6v1.6h-1.6zM781 611h1.6v1.6h-1.6zM841 35h1.6v1.6h-1.6zM841 47h1.6v1.6h-1.6zM841 59h1.6v1.6h-1.6zM841 71h1.6v1.6h-1.6zM841 83h1.6v1.6h-1.6zM841 95h1.6v1.6h-1.6zM841 107h1.6v1.6h-1.6zM841 119h1.6v1.6h-1.6zM841 131h1.6v1.6h-1.6zM841 143h1.6v1.6h-1.6zM841 155h1.6v1.6h-1.6zM841 167h1.6v1.6h-1.6zM841 179h1.6v1.6h-1.6zM841 191h1.6v1.6h-1.6zM841 203h1.6v1.6h-1.6zM841 215h1.6v1.6h-1.6zM841 227h1.6v1.6h-1.6zM841 239h1.6v1.6h-1.6zM841 251h1.6v1.6h-1.6zM841 263h1.6v1.6h-1.6zM841 275h1.6v1.6h-1.6zM841 287h1.6v1.6h-1.6zM841 299h1.6v1.6h-1.6zM841 311h1.6v1.6h-1.6zM841 323h1.6v1.6h-1.6zM841 335h1.6v1.6h-1.6zM841 347h1.6v1.6h-1.6zM841 359h1.6v1.6h-1.6zM841 371h1.6v1.6h-1.6zM841 383h1.6v1.6h-1.6zM841 395h1.6v1.6h-1.6zM841 407h1.6v1.6h-1.6zM841 419h1.6v1.6h-1.6zM841 431h1.6v1.6h-1.6zM841 443h1.6v1.6h-1.6zM841 455h1.6v1.6h-1.6zM841 467h1.6v1.6h-1.6zM841 479h1.6v1.6h-1.6zM841 491h1.6v1.6h-1.6zM841 503h1.6v1.6h-1.6zM841 515h1.6v1.6h-1.6zM841 527h1.6v1.6h-1.6zM841 539h1.6v1.6h-1.6zM841 551h1.6v1.6h-1.6zM841 563h1.6v1.6h-1.6zM841 575h1.6v1.6h-1.6zM841 587h1.6v1.6h-1.6zM841 599h1.6v1.6h-1.6zM841 611h1.6v1.6h-1.6zM901 35h1.6v1.6h-1.6zM901 47h1.6v1.6h-1.6zM901 59h1.6v1.6h-1.6zM901 71h1.6v1.6h-1.6zM901 83h1.6v1.6h-1.6zM901 95h1.6v1.6h-1.6zM901 107h1.6v1.6h-1.6zM901 119h1.6v1.6h-1.6zM901 131h1.6v1.6h-1.6zM901 143h1.6v1.6h-1.6zM901 155h1.6v1.6h-1.6zM901 167h1.6v1.6h-1.6zM901 179h1.6v1.6h-1.6zM901 191h1.6v1.6h-1.6zM901 203h1.6v1.6h-1.6zM901 215h1.6v1.6h-1.6zM901 227h1.6v1.6h-1.6zM901 239h1.6v1.6h-1.6zM901 251h1.6v1.6h-1.6zM901 263h1.6v1.6h-1.6zM901 275h1.6v1.6h-1.6zM901 287h1.6v1.6h-1.6zM901 299h1.6v1.6h-1.6zM901 311h1.6v1.6h-1.6zM901 323h1.6v1.6h-1.6zM901 335h1.6v1.6h-1.6zM901 347h1.6v1.6h-1.6zM901 359h1.6v1.6h-1.6zM901 371h1.6v1.6h-1.6zM901 383h1.6v1.6h-1.6zM901 395h1.6v1.6h-1.6zM901 407h1.6v1.6h-1.6zM901 419h1.6v1.6h-1.6zM901 431h1.6v1.6h-1.6zM901 443h1.6v1.6h-1.6zM901 455h1.6v1.6h-1.6zM901 467h1.6v1.6h-1.6zM901 479h1.6v1.6h-1.6zM901 491h1.6v1.6h-1.6zM901 503h1.6v1.6h-1.6zM901 515h1.6v1.6h-1.6zM901 527h1.6v1.6h-1.6zM901 539h1.6v1.6h-1.6zM901 551h1.6v1.6h-1.6zM901 563h1.6v1.6h-1.6zM901 575h1.6v1.6h-1.6zM901 587h1.6v1.6h-1.6zM901 599h1.6v1.6h-1.6zM901 611h1.6v1.6h-1.6z" fill="#8c8c8c"/><path d="M37 322h1v3h-1zM49 322h1v3h-1zM61 322h1v3h-1zM73 322h1v3h-1zM85 322h1v3h-1zM97 322h1v3h-1zM109 322h1v3h-1zM121 322h1v3h-1zM133 322h1v3h-1zM145 322h1v3h-1zM157 322h1v3h-1zM169 322h1v3h-1zM181 322h1v3h-1zM193 322h1v3h-1zM205 322h1v3h-1zM217 322h1v3h-1zM229 322h1v3h-1zM241 322h1v3h-1zM253 322h1v3h-1zM265 322h1v3h-1zM277 322h1v3h-1zM289 322h1v3h-1zM301 322h1v3h-1zM313 322h1v3h-1zM325 322h1v3h-1zM337 322h1v3h-1zM349 322h1v3h-1zM361 322h1v3h-1zM373 322h1v3h-1zM385 322h1v3h-1zM397 322h1v3h-1zM409 322h1v3h-1zM421 322h1v3h-1zM433 322h1v3h-1zM445 322h1v3h-1zM457 322h1v3h-1zM469 322h1v3h-1zM481 322h1v3h-1zM493 322h1v3h-1zM505 322h1v3h-1zM517 322h1v3h-1zM529 322h1v3h-1zM541 322h1v3h-1zM553 322h1v3h-1zM565 322h1v3h-1zM577 322h1v3h-1zM589 322h1v3h-1zM601 322h1v3h-1zM613 322h1v3h-1zM625 322h1v3h-1zM637 322h1v3h-1zM649 322h1v3h-1zM661 322h1v3h-1zM673 322h1v3h-1zM685 322h1v3h-1zM697 322h1v3h-1zM709 322h1v3h-1zM721 322h1v3h-1zM733 322h1v3h-1zM745 322h1v3h-1zM757 322h1v3h-1zM769 322h1v3h-1zM781 322h1v3h-1zM793 322h1v3h-1zM805 322h1v3h-1zM817 322h1v3h-1zM829 322h1v3h-1zM841 322h1v3h-1zM853 322h1v3h-1zM865 322h1v3h-1zM877 322h1v3h-1zM889 322h1v3h-1zM901 322h1v3h-1zM913 322h1v3h-1zM925 322h1v3h-1zM480 35h3v1h-3zM480 47h3v1h-3zM480 59h3v1h-3zM480 71h3v1h-3zM480 83h3v1h-3zM480 95h3v1h-3zM480 107h3v1h-3zM480 119h3v1h-3zM480 131h3v1h-3zM480 143h3v1h-3zM480 155h3v1h-3zM480 167h3v1h-3zM480 179h3v1h-3zM480 191h3v1h-3zM480 203h3v1h-3zM480 215h3v1h-3zM480 227h3v1h-3zM480 239h3v1h-3zM480 251h3v1h-3zM480 263h3v1h-3zM480 275h3v1h-3zM480 287h3v1h-3zM480 299h3v1h-3zM480 311h3v1h-3zM480 323h3v1h-3zM480 335h3v1h-3zM480 347h3v1h-3zM480 359h3v1h-3zM480 371h3v1h-3zM480 383h3v1h-3zM480 395h3v1h-3zM480 407h3v1h-3zM480 419h3v1h-3zM480 431h3v1h-3zM480 443h3v1h-3zM480 455h3v1h-3zM480 467h3v1h-3zM480 479h3v1h-3zM480 491h3v1h-3zM480 503h3v1h-3zM480 515h3v1h-3zM480 527h3v1h-3zM480 539h3v1h-3zM480 551h3v1h-3zM480 563h3v1h-3zM480 575h3v1h-3zM480 587h3v1h-3zM480 599h3v1h-3zM480 611h3v1h-3z" fill="#d8d8d8"/><path d="M174 323h15v1h-15zM181 316h1v15h-1z" fill="#e0e0e0"/><path d="M774 323h15v1h-15zM781 316h1v15h-1z" fill="#e0e0e0"/><path d="M37 25h1v3h-1zM37 618h1v3h-1zM49 25h1v3h-1zM49 618h1v3h-1zM61 25h1v7h-1zM61 614h1v7h-1zM73 25h1v3h-1zM73 618h1v3h-1zM85 25h1v3h-1zM85 618h1v3h-1zM97 25h1v3h-1zM97 618h1v3h-1zM109 25h1v3h-1zM109 618h1v3h-1zM121 25h1v7h-1zM121 614h1v7h-1zM133 25h1v3h-1zM133 618h1v3h-1zM145 25h1v3h-1zM145 618h1v3h-1zM157 25h1v3h-1zM157 618h1v3h-1zM169 25h1v3h-1zM169 618h1v3h-1zM181 25h1v7h-1zM181 614h1v7h-1zM193 25h1v3h-1zM193 618h1v3h-1zM205 25h1v3h-1zM205 618h1v3h-1zM217 25h1v3h-1zM217 618h1v3h-1zM229 25h1v3h-1zM229 618h1v3h-1zM241 25h1v7h-1zM241 614h1v7h-1zM253 25h1v3h-1zM253 618h1v3h-1zM265 25h1v3h-1zM265 618h1v3h-1zM277 25h1v3h-1zM277 618h1v3h-1zM289 25h1v3h-1zM289 618h1v3h-1zM301 25h1v7h-1zM301 614h1v7h-1zM313 25h1v3h-1zM313 618h1v3h-1zM325 25h1v3h-1zM325 618h1v3h-1zM337 25h1v3h-1zM337 618h1v3h-1zM349 25h1v3h-1zM349 618h1v3h-1zM361 25h1v7h-1zM361 614h1v7h-1zM373 25h1v3h-1zM373 618h1v3h-1zM385 25h1v3h-1zM385 618h1v3h-1zM397 25h1v3h-1zM397 618h1v3h-1zM409 25h1v3h-1zM409 618h1v3h-1zM421 25h1v7h-1zM421 614h1v7h-1zM433 25h1v3h-1zM433 618h1v3h-1zM445 25h1v3h-1zM445 618h1v3h-1zM457 25h1v3h-1zM457 618h1v3h-1zM469 25h1v3h-1zM469 618h1v3h-1zM481 25h1v7h-1zM481 614h1v7h-1zM493 25h1v3h-1zM493 618h1v3h-1zM505 25h1v3h-1zM505 618h1v3h-1zM517 25h1v3h-1zM517 618h1v3h-1zM529 25h1v3h-1zM529 618h1v3h-1zM541 25h1v7h-1zM541 614h1v7h-1zM553 25h1v3h-1zM553 618h1v3h-1zM565 25h1v3h-1zM565 618h1v3h-1zM577 25h1v3h-1zM577 618h1v3h-1zM589 25h1v3h-1zM589 618h1v3h-1zM601 25h1v7h-1zM601 614h1v7h-1zM613 25h1v3h-1zM613 618h1v3h-1zM625 25h1v3h-1zM625 618h1v3h-1zM637 25h1v3h-1zM637 618h1v3h-1zM649 25h1v3h-1zM649 618h1v3h-1zM661 25h1v7h-1zM661 614h1v7h-1zM673 25h1v3h-1zM673 618h1v3h-1zM685 25h1v3h-1zM685 618h1v3h-1zM697 25h1v3h-1zM697 618h1v3h-1zM709 25h1v3h-1zM709 618h1v3h-1zM721 25h1v7h-1zM721 614h1v7h-1zM733 25h1v3h-1zM733 618h1v3h-1zM745 25h1v3h-1zM745 618h1v3h-1zM757 25h1v3h-1zM757 618h1v3h-1zM769 25h1v3h-1zM769 618h1v3h-1zM781 25h1v7h-1zM781 614h1v7h-1zM793 25h1v3h-1zM793 618h1v3h-1zM805 25h1v3h-1zM805 618h1v3h-1zM817 25h1v3h-1zM817 618h1v3h-1zM829 25h1v3h-1zM829 618h1v3h-1zM841 25h1v7h-1zM841 614h1v7h-1zM853 25h1v3h-1zM853 618h1v3h-1zM865 25h1v3h-1zM865 618h1v3h-1zM877 25h1v3h-1zM877 618h1v3h-1zM889 25h1v3h-1zM889 618h1v3h-1zM901 25h1v7h-1zM901 614h1v7h-1zM913 25h1v3h-1zM913 618h1v3h-1zM925 25h1v3h-1zM925 618h1v3h-1zM26 35h4v1h-4zM930 35h4v1h-4zM26 47h4v1h-4zM930 47h4v1h-4zM26 59h4v1h-4zM930 59h4v1h-4zM26 71h4v1h-4zM930 71h4v1h-4zM26 83h7v1h-7zM927 83h7v1h-7zM26 95h4v1h-4zM930 95h4v1h-4zM26 107h4v1h-4zM930 107h4v1h-4zM26 119h4v1h-4zM930 119h4v1h-4zM26 131h4v1h-4zM930 131h4v1h-4zM26 143h7v1h-7zM927 143h7v1h-7zM26 155h4v1h-4zM930 155h4v1h-4zM26 167h4v1h-4zM930 167h4v1h-4zM26 179h4v1h-4zM930 179h4v1h-4zM26 191h4v1h-4zM930 191h4v1h-4zM26 203h7v1h-7zM927 203h7v1h-7zM26 215h4v1h-4zM930 215h4v1h-4zM26 227h4v1h-4zM930 227h4v1h-4zM26 239h4v1h-4zM930 239h4v1h-4zM26 251h4v1h-4zM930 251h4v1h-4zM26 263h7v1h-7zM927 263h7v1h-7zM26 275h4v1h-4zM930 275h4v1h-4zM26 287h4v1h-4zM930 287h4v1h-4zM26 299h4v1h-4zM930 299h4v1h-4zM26 311h4v1h-4zM930 311h4v1h-4zM26 323h7v1h-7zM927 323h7v1h-7zM26 335h4v1h-4zM930 335h4v1h-4zM26 347h4v1h-4zM930 347h4v1h-4zM26 359h4v1h-4zM930 359h4v1h-4zM26 371h4v1h-4zM930 371h4v1h-4zM26 383h7v1h-7zM927 383h7v1h-7zM26 395h4v1h-4zM930 395h4v1h-4zM26 407h4v1h-4zM930 407h4v1h-4zM26 419h4v1h-4zM930 419h4v1h-4zM26 431h4v1h-4zM930 431h4v1h-4zM26 443h7v1h-7zM927 443h7v1h-7zM26 455h4v1h-4zM930 455h4v1h-4zM26 467h4v1h-4zM930 467h4v1h-4zM26 479h4v1h-4zM930 479h4v1h-4zM26 491h4v1h-4zM930 491h4v1h-4zM26 503h7v1h-7zM927 503h7v1h-7zM26 515h4v1h-4zM930 515h4v1h-4zM26 527h4v1h-4zM930 527h4v1h-4zM26 539h4v1h-4zM930 539h4v1h-4zM26 551h4v1h-4zM930 551h4v1h-4zM26 563h7v1h-7zM927 563h7v1h-7zM26 575h4v1h-4zM930 575h4v1h-4zM26 587h4v1h-4zM930 587h4v1h-4zM26 599h4v1h-4zM930 599h4v1h-4zM26 611h4v1h-4zM930 611h4v1h-4z" fill="#f0f0f0"/><rect x="25" y="24" width="910" height="598" fill="none" stroke="#fafafa" stroke-width="2"/><rect x="24" y="620" width="912" height="3" fill="#fafafa"/><line x1="429.0" y1="25" x2="429.0" y2="621" stroke="#a02cb0" stroke-width="1.7" stroke-dasharray="2.5 2.5"/><line x1="472.0" y1="25" x2="472.0" y2="621" stroke="#a02cb0" stroke-width="1.7" stroke-dasharray="2.5 2.5"/><rect x="430" y="322.5" width="43" height="3" fill="#f0f000"/><rect x="474" y="234" width="311" height="4" fill="#f0f000"/><rect x="799" y="322.5" width="135" height="3" fill="#f0f000"/><path d="M471.5 324 L472.5 298 L473.5 298 L474 256 L475 256 L475.5 235" fill="none" stroke="#f0f000" stroke-width="2"/><path d="M784 236 L784.5 255 L785.5 270 L800 324" fill="none" stroke="#f0f000" stroke-width="2"/><path d="M432 321.0h2v1.5h-2zM436 325.5h2v2.3h-2zM439 321.0h2v1.5h-2zM442 321.0h2v1.5h-2zM445 325.5h2v2.3h-2zM449 325.5h2v2.3h-2zM455 325.5h2v2.3h-2zM459 325.5h2v2.3h-2zM462 325.5h2v2.3h-2zM466 325.5h2v2.3h-2zM477 238h2v2.5h-2zM480 238h2v2.5h-2zM491 238h2v2.5h-2zM495 238h2v2.5h-2zM511 238h2v2.5h-2zM514 238h2v2.5h-2zM525 238h2v2.5h-2zM531 238h2v2.5h-2zM538 238h2v2.5h-2zM544 238h2v2.5h-2zM548 238h2v2.5h-2zM553 238h2v2.5h-2zM556 238h2v2.5h-2zM559 238h2v2.5h-2zM564 238h2v2.5h-2zM571 238h2v2.5h-2zM574 238h2v2.5h-2zM579 238h2v2.5h-2zM583 238h2v2.5h-2zM598 238h2v2.5h-2zM619 238h2v2.5h-2zM623 238h2v2.5h-2zM629 238h2v2.5h-2zM639 238h2v2.5h-2zM647 238h2v2.5h-2zM651 238h2v2.5h-2zM671 238h2v2.5h-2zM674 238h2v2.5h-2zM682 238h2v2.5h-2zM694 238h2v2.5h-2zM703 238h2v2.5h-2zM708 238h2v2.5h-2zM713 238h2v2.5h-2zM717 238h2v2.5h-2zM726 238h2v2.5h-2zM730 238h2v2.5h-2zM738 238h2v2.5h-2zM752 238h2v2.5h-2zM755 238h2v2.5h-2zM758 238h2v2.5h-2zM777 238h2v2.5h-2zM806 325.5h2v2.3h-2zM817 325.5h2v2.3h-2zM820 325.5h2v2.3h-2zM827 325.5h2v2.3h-2zM832 321.0h2v1.5h-2zM836 325.5h2v2.3h-2zM840 325.5h2v2.3h-2zM847 321.0h2v1.5h-2zM850 325.5h2v2.3h-2zM855 325.5h2v2.3h-2zM858 325.5h2v2.3h-2zM865 325.5h2v2.3h-2zM870 325.5h2v2.3h-2zM879 325.5h2v2.3h-2zM885 321.0h2v1.5h-2zM888 325.5h2v2.3h-2zM894 321.0h2v1.5h-2zM898 325.5h2v2.3h-2zM906 321.0h2v1.5h-2zM909 325.5h2v2.3h-2zM915 325.5h2v2.3h-2zM922 321.0h2v1.5h-2zM927 321.0h2v1.5h-2z" fill="#e4e038"/></svg>
<div class="a" style="left:0;top:0;width:960px;height:1.5px;background:#000c24"></div>
<div class="a m" style="left:29px;top:5px;color:#041a50;-webkit-text-stroke:0.35px #041a50">AKTAKOM</div>
<div class="pill" style="left:144px;top:1.5px;width:96px;height:21px;background:#e60000;border-radius:7px / 10.5px"></div>
<div class="a m" style="left:168px;top:4px;color:#380000;-webkit-text-stroke:0.3px #380000">Stop</div>
<div class="pill" style="left:300px;top:1px;width:361px;height:22px"></div>
<div class="a" style="left:312px;top:10.5px;width:337px;height:1.6px;background:#c4c830"></div>
<div class="a" style="left:354px;top:2.5px;width:2px;height:20.5px;background:#c8c8c8"></div><div class="a" style="left:354px;top:2.5px;width:3.5px;height:1.2px;background:#c8c8c8"></div>
<div class="a" style="left:605px;top:2.5px;width:2px;height:20.5px;background:#c8c8c8"></div><div class="a" style="left:603.5px;top:2.5px;width:3.5px;height:1.2px;background:#c8c8c8"></div>
<div class="a" style="left:436px;top:2.5px;width:8px;height:2.5px;background:#e020e0;border-radius:0 0 2px 2px"></div>
<div class="a" style="left:439px;top:3px;width:2px;height:4.5px;background:#e020e0"></div>
<div class="pill" style="left:672px;top:1px;width:129px;height:22px"></div>
<svg class="a" style="left:675px;top:2.5px" width="18" height="20"><path d="M1.8 3Q1.8 1.5 3.3 1.5H14.7Q16.2 1.5 16.2 3V13.5L11.5 18H6.5L1.8 13.5Z" fill="#000" stroke="#8a2cd0" stroke-width="1.7"/><path d="M5 5h8v2h-3v7.5h-2V7H5z" fill="#d040e8"/></svg>
<div class="a m" style="left:695px;top:5px;color:#e8e8e8">480.0ms</div>
<div class="pill" style="left:820px;top:1px;width:71px;height:22px"></div>
<div class="a m" style="left:831px;top:5px;color:#e8e8e8">9:03</div>
<svg class="a" style="left:904px;top:2px" width="20" height="20"><path d="M6.5 11.5L14.5 8.5L17.5 12.5L9 16.5Z" fill="#283868" stroke="#dcbcd0" stroke-width="1.6" stroke-linejoin="round"/><path d="M2.5 5C3 2.5 7 1.5 11.5 2.5L12 6C10 7 8.5 8.5 7.5 10C5 9.5 2 7.5 2.5 5Z" fill="#38c020"/><path d="M10 3L12 6L9 8Z" fill="#20a010"/><path d="M5.5 10L7 15" stroke="#a8d8e8" stroke-width="1.4"/></svg>

<!-- channel marker -->
<svg class="a" style="left:0;top:312px" width="26" height="24"><path d="M1 1.5H17L24 11.5L17 21.5H1Z" fill="#000" stroke="#b0e040" stroke-width="1.6"/><text x="4" y="18.5" font-family="Liberation Sans" font-size="19" fill="#e0e040">2</text></svg>

<!-- cursor box -->
<div class="a" style="left:30px;top:510px;width:226px;height:113px;border:2px solid #90b8cc;border-bottom:4px solid #78aab4;border-radius:5px;background:#000"></div>
<div class="a m" style="left:40px;top:516px;color:#dcdcdc"><svg width="11" height="8" style="display:inline-block;vertical-align:0;margin-right:1px"><path d="M5.5 1L10.3 7H0.7Z" fill="none" stroke="#dcdcdc" stroke-width="1.3"/></svg>x:0.144s</div>
<div class="a m" style="left:40px;top:543px;color:#dcdcdc">1/<svg width="11" height="8" style="display:inline-block;vertical-align:0;margin-right:1px"><path d="M5.5 1L10.3 7H0.7Z" fill="none" stroke="#dcdcdc" stroke-width="1.3"/></svg>x:6.944HZ</div>
<div class="a m" style="left:40px;top:573px;color:#dcdcdc">x1:-0.304s</div>
<div class="a m" style="left:40px;top:599px;color:#dcdcdc">x2:-0.448s</div>

<!-- bottom left panels -->
<div class="a" style="left:0;top:623px;width:383px;height:97px;background:#1088d8"></div>
<div class="a" style="left:250.5px;top:623px;width:2.5px;height:49px;background:#80b8c8"></div>
<div class="a" style="left:380.5px;top:623px;width:2.5px;height:97px;background:#80b8c8"></div>
<div class="a" style="left:0;top:671px;width:383px;height:2px;background:#88b0b8"></div>
<div class="a" style="left:0;top:623px;width:2px;height:97px;background:#78a8c0"></div>
<div class="a" style="left:0;top:716px;width:383px;height:4px;background:#78b0c0"></div>
<div class="a" style="left:2px;top:646px;width:248.5px;height:3px;background:#1c3c4c"></div>
<div class="panel" style="left:2px;top:623px;width:248.5px;height:24px;border-radius:4px"></div>
<div class="panel" style="left:2px;top:648px;width:248.5px;height:23px;border-radius:4px"></div>
<div class="panel" style="left:253px;top:623px;width:127.5px;height:48px;border-radius:4px"></div>
<div class="panel" style="left:2px;top:673px;width:378.5px;height:43px;border-radius:4px"></div>
<svg class="a" style="left:2.5px;top:626.2px" width="20" height="20"><circle cx="10" cy="10" r="9.3" fill="#f01010"/><path d="M11.4 4.6H13.8V15.4H11.4V8.2L8.8 9.4V7.2Z" fill="#1a0000"/></svg>
<div class="a m" style="left:23px;top:630px;color:#c81818">5V-</div>
<div class="a m" style="left:127px;top:630px;color:#c81818">0.00div</div>
<div class="circ" style="left:2px;top:650px;background:#e8e820">2</div>
<div class="a m" style="left:23px;top:654px;color:#d0d038">2V-</div>
<div class="a m" style="left:127px;top:654px;color:#d0d038">0.00div</div>
<div class="a m" style="left:262.5px;top:628px;color:#dcdcdc">(2.5KS/s)</div>
<div class="a m" style="left:261px;top:652px;color:#dcdcdc">Depth:10K</div>
<div class="circ" style="left:2px;top:675px;background:#e8e820">2</div>
<div class="a m" style="left:24px;top:677px;color:#d0d038">F:  ?</div>
<div class="circ" style="left:2px;top:697px;background:#e8e820">2</div>
<div class="a m" style="left:24px;top:699px;color:#d0d038">+D:48.1%</div>
<div class="circ" style="left:192px;top:675px;background:#e8e820">2</div>
<div class="a m" style="left:217px;top:677px;color:#d0d038">Vk:1.698v</div>
<div class="circ" style="left:192px;top:697px;background:#e8e820">2</div>
<div class="a m" style="left:217px;top:699px;color:#d0d038">V:999.3mv</div>

<!-- right bottom -->
<div class="a" style="left:495px;top:645px;width:465px;height:75px;background:#0060a0"></div>
<div class="a" style="left:383px;top:645px;width:112px;height:75px;background:#0074d6"></div>
<div class="pill" style="left:384px;top:623px;width:117px;height:22px"></div>
<div class="a m" style="left:397px;top:627px;color:#e8e8e8">M:200ms</div>
<div class="pill" style="left:798px;top:623px;width:154px;height:22px"></div>
<svg class="a" style="left:800.5px;top:624.5px" width="20" height="20"><circle cx="10" cy="10" r="9.3" fill="#f01010"/><path d="M11.4 4.6H13.8V15.4H11.4V8.2L8.8 9.4V7.2Z" fill="#1a0000"/></svg>
<svg class="a" style="left:822px;top:625px" width="24" height="20"><path d="M1 17H9L13 3H22" fill="none" stroke="#e8e8e8" stroke-width="1.6"/></svg>
<div class="a m" style="left:848px;top:628px;color:#e8e8e8">0.00mV</div>
<div class="btn" style="left:387px;top:649px;width:107px;height:66px"></div>
<div class="a m" style="left:415px;top:660px;color:#06205a;font-weight:bold">Type</div>
<div class="a" style="left:409px;top:685px;width:60px;height:24px;background:#e4e4e4"></div>
<div class="a m" style="left:410px;top:689px;color:#101010">Image</div>
<div class="btn" style="left:717px;top:649px;width:106px;height:66px"></div>
<div class="a s" style="left:745px;top:675px;font-size:16px;letter-spacing:3.9px;color:#041e58;-webkit-text-stroke:0.45px #041e58">Save</div>
<div class="a" style="left:383px;top:717px;width:577px;height:3px;background:#0672cc"></div>
</div></body></html>
